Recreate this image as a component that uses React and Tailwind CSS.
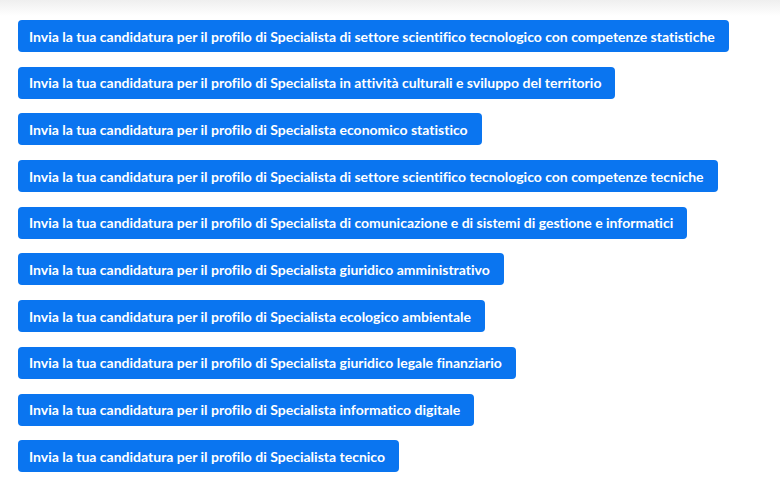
const profili = [
  'di settore scientifico tecnologico con competenze statistiche',
  'in attività culturali e sviluppo del territorio',
  'economico statistico',
  'di settore scientifico tecnologico con competenze tecniche',
  'di comunicazione e di sistemi di gestione e informatici',
  'giuridico amministrativo',
  'ecologico ambientale',
  'giuridico legale finanziario',
  'informatico digitale',
  'tecnico',
]

export default function App() {
  return (
    <div className="min-h-[482px] bg-white font-['Lato','Noto_Sans',sans-serif]">
      <div className="h-4 bg-gradient-to-b from-[#efefef] to-white" />
      <div className="flex flex-col items-start gap-[14.7px] px-[18px] pt-1">
        {profili.map((p) => (
          <a
            key={p}
            href="#"
            className="flex h-8 items-center rounded bg-[#0a75f0] pl-[11px] pr-[14px] text-[14px] font-bold text-white [font-variant-ligatures:none]"
          >
            Invia la tua candidatura per il profilo di Specialista {p}
          </a>
        ))}
      </div>
    </div>
  )
}
